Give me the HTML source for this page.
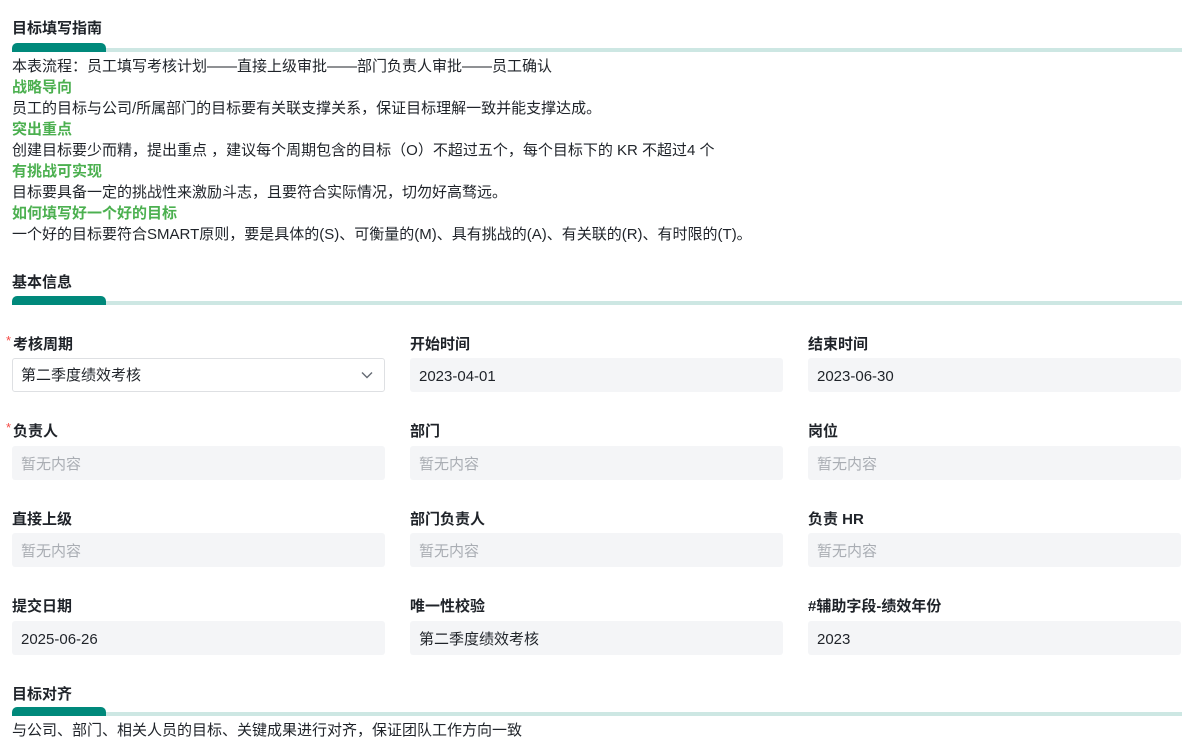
<!DOCTYPE html>
<html><head><meta charset="utf-8"><style>
*{margin:0;padding:0;box-sizing:border-box}
body{width:1200px;height:742px;background:#fff;font-family:"Liberation Sans","Noto Sans CJK SC",sans-serif;color:#1f2329;position:relative;overflow:hidden;font-size:15px}
.a{position:absolute;white-space:nowrap}
.t{font-weight:bold;font-size:15px;color:#1f2329}
.bar{position:absolute;left:12px;width:1170px;height:9px}
.bar .l{position:absolute;left:0;right:0;bottom:0;height:4px;background:#cde7e3}
.bar .d{position:absolute;left:0;top:0;width:94px;height:9px;background:#00897b;border-radius:5px 5px 0 0}
.g{color:#4cb050;font-weight:bold}
.lab{font-weight:bold;font-size:15px}
.lab i{color:#f54a45;font-style:normal;font-weight:normal;position:absolute;left:-7px;top:0px;font-size:13px}
.in{position:absolute;width:373px;height:34px;background:#f4f5f7;border-radius:3px;padding-left:9px;padding-top:2px;line-height:34px;font-size:15px;color:#1f2329}
.in.e{color:#a9adb3}
.sel{background:#fff;border:1px solid #dee0e3;padding-left:8px;padding-top:1px;line-height:32px}
</style></head><body>
<div class="a t" style="left:12px;top:17px">目标填写指南</div>
<div class="bar" style="top:43px"><div class="l"></div><div class="d"></div></div>
<div class="a" style="left:12px;top:56px;line-height:21px">本表流程：员工填写考核计划——直接上级审批——部门负责人审批——员工确认<br>
<span class="g">战略导向</span><br>员工的目标与公司/所属部门的目标要有关联支撑关系，保证目标理解一致并能支撑达成。<br>
<span class="g">突出重点</span><br>创建目标要少而精，提出重点 ，建议每个周期包含的目标（O）不超过五个，每个目标下的 KR 不超过4 个<br>
<span class="g">有挑战可实现</span><br>目标要具备一定的挑战性来激励斗志，且要符合实际情况，切勿好高骛远。<br>
<span class="g">如何填写好一个好的目标</span><br>一个好的目标要符合SMART原则，要是具体的(S)、可衡量的(M)、具有挑战的(A)、有关联的(R)、有时限的(T)。</div>

<div class="a t" style="left:12px;top:271px">基本信息</div>
<div class="bar" style="top:296px"><div class="l"></div><div class="d"></div></div>

<div class="a lab" style="left:13px;top:333px"><i>*</i>考核周期</div>
<div class="in sel" style="left:12px;top:358px">第二季度绩效考核<svg style="position:absolute;right:11px;top:12px" width="12" height="8" viewBox="0 0 12 8"><path d="M1 1.5L6 6.5L11 1.5" fill="none" stroke="#646a73" stroke-width="1.4"/></svg></div>
<div class="a lab" style="left:410px;top:333px">开始时间</div>
<div class="in" style="left:410px;top:358px">2023-04-01</div>
<div class="a lab" style="left:808px;top:333px">结束时间</div>
<div class="in" style="left:808px;top:358px">2023-06-30</div>

<div class="a lab" style="left:13px;top:420px"><i>*</i>负责人</div>
<div class="in e" style="left:12px;top:446px">暂无内容</div>
<div class="a lab" style="left:410px;top:420px">部门</div>
<div class="in e" style="left:410px;top:446px">暂无内容</div>
<div class="a lab" style="left:808px;top:420px">岗位</div>
<div class="in e" style="left:808px;top:446px">暂无内容</div>

<div class="a lab" style="left:12px;top:508px">直接上级</div>
<div class="in e" style="left:12px;top:533px">暂无内容</div>
<div class="a lab" style="left:410px;top:508px">部门负责人</div>
<div class="in e" style="left:410px;top:533px">暂无内容</div>
<div class="a lab" style="left:808px;top:508px">负责 HR</div>
<div class="in e" style="left:808px;top:533px">暂无内容</div>

<div class="a lab" style="left:12px;top:595px">提交日期</div>
<div class="in" style="left:12px;top:621px">2025-06-26</div>
<div class="a lab" style="left:410px;top:595px">唯一性校验</div>
<div class="in" style="left:410px;top:621px">第二季度绩效考核</div>
<div class="a lab" style="left:808px;top:595px">#辅助字段-绩效年份</div>
<div class="in" style="left:808px;top:621px">2023</div>

<div class="a t" style="left:12px;top:683px">目标对齐</div>
<div class="bar" style="top:707px"><div class="l"></div><div class="d"></div></div>
<div class="a" style="left:12px;top:720px;line-height:21px">与公司、部门、相关人员的目标、关键成果进行对齐，保证团队工作方向一致</div>
</body></html>
